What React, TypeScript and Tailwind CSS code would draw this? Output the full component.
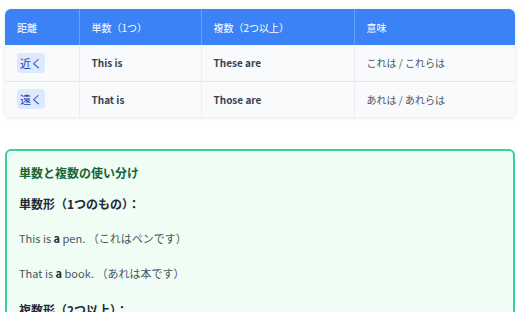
import React from 'react';

const rows = [
  { dist: '近く', single: 'This is', plural: 'These are', meaning: 'これは / これらは' },
  { dist: '遠く', single: 'That is', plural: 'Those are', meaning: 'あれは / あれらは' },
];

const App: React.FC = () => {
  return (
    <div className="min-h-screen bg-white px-[5px] pt-[9px]" style={{ fontFamily: '"Noto Sans CJK JP", "Noto Sans", sans-serif' }}>
      {/* 比較表 */}
      <div className="overflow-hidden rounded-md shadow-[0_1px_4px_rgba(0,0,0,0.1)]">
        <table className="w-full border-collapse text-left text-[10px]">
          <thead>
            <tr className="bg-[#3b82f6] text-white">
              <th className="h-[36px] w-[74px] px-3 font-normal">距離</th>
              <th className="w-[122px] border-l border-[#60a5fa] px-3 font-normal">単数（1つ）</th>
              <th className="w-[153px] border-l border-[#60a5fa] px-3 font-normal">複数（2つ以上）</th>
              <th className="border-l border-[#60a5fa] px-3 font-normal">意味</th>
            </tr>
          </thead>
          <tbody>
            {rows.map((r, i) => (
              <tr key={i} className={`bg-[#f8fafc] ${i > 0 ? 'border-t border-[#e5e7eb]' : ''}`}>
                <td className="h-[36px] px-3">
                  <span className="rounded bg-[#dbeafe] px-[3px] py-[2px] text-[11px] text-[#1e40af]">{r.dist}</span>
                </td>
                <td className="border-l border-[#eceef1] px-3 font-bold text-[#374151]">{r.single}</td>
                <td className="border-l border-[#eceef1] px-3 font-bold text-[#374151]">{r.plural}</td>
                <td className="border-l border-[#eceef1] px-3 text-[#4b5563]">{r.meaning}</td>
              </tr>
            ))}
          </tbody>
        </table>
      </div>

      {/* 使い分けの説明 */}
      <div className="mt-[32px] rounded-md border-2 border-[#34d399] bg-[#f0fdf4] px-3 pt-[13px] pb-4">
        <h3 className="text-[12px] font-bold leading-[18px] text-[#166534]">単数と複数の使い分け</h3>
        <h4 className="mt-[13px] text-[12px] font-bold leading-[18px] text-[#1f2937]">単数形（1つのもの）：</h4>
        <p className="mt-[16px] text-[11px] leading-[18px] text-[#4b5563]">This is <b className="text-[#1f2937]">a</b> pen. （これはペンです）</p>
        <p className="mt-[17px] text-[11px] leading-[18px] text-[#4b5563]">That is <b className="text-[#1f2937]">a</b> book. （あれは本です）</p>
        <h4 className="mt-[19px] text-[12px] font-bold leading-[18px] text-[#1f2937]">複数形（2つ以上）：</h4>
      </div>
    </div>
  );
};

export default App;
